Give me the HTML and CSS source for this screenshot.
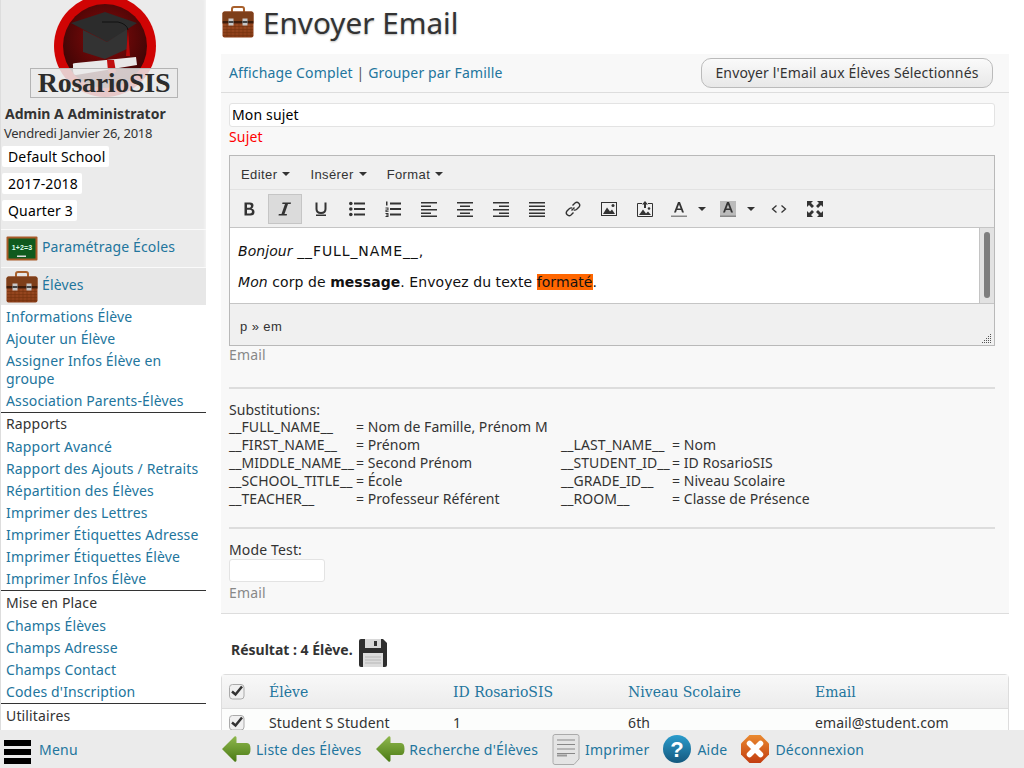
FILE: index.html
```html
<!DOCTYPE html>
<html lang="fr">
<head>
<meta charset="utf-8">
<title>Envoyer Email</title>
<link rel="stylesheet" href="styles.css">
</head>
<body>
<svg class="defs" width="0" height="0" aria-hidden="true">
  <defs>
    <linearGradient id="bagG" x1="0" y1="0" x2="0" y2="1"><stop offset="0" stop-color="#a8542a"/><stop offset="1" stop-color="#8a3d18"/></linearGradient>
    <linearGradient id="arrG" x1="0" y1="0" x2="0" y2="1"><stop offset="0" stop-color="#8fb84e"/><stop offset="1" stop-color="#4a7a14"/></linearGradient>
    <linearGradient id="helpG" x1="0" y1="0" x2="0" y2="1"><stop offset="0" stop-color="#2a9ccc"/><stop offset="1" stop-color="#15587e"/></linearGradient>
    <linearGradient id="closeG" x1="0" y1="0" x2="0" y2="1"><stop offset="0" stop-color="#ea8a30"/><stop offset="1" stop-color="#c23c10"/></linearGradient>
    <radialGradient id="logoG" cx="0.5" cy="0.4" r="0.6"><stop offset="0" stop-color="#8a0a0a"/><stop offset="1" stop-color="#3a0505"/></radialGradient>
    <symbol id="bag" viewBox="0 0 32 32">
      <path d="M10 7V3Q10 1 12 1H20Q22 1 22 3V7" fill="none" stroke="#a8602c" stroke-width="2"/>
      <rect x="0.500" y="5.500" width="31" height="26" rx="2" fill="url(#bagG)"/>
      <path d="M0.500 7.500Q0.500 5.500 2.500 5.500H29.500Q31.500 5.500 31.500 7.500V15H0.500Z" fill="#7e3f1a"/>
      <path d="M1 20.500H31M1 23.500H31M1 26.500H31M1 29.500H31M5 18V31M9 18V31M13 18V31M17 18V31M21 18V31M25 18V31M29 18V31" stroke="#73330f" stroke-width="0.600" fill="none"/>
      <rect x="0.500" y="15" width="31" height="2.500" fill="#3e1c0a"/>
      <rect x="6.500" y="12.500" width="5" height="7" fill="#c8c8c8"/><rect x="20.500" y="12.500" width="5" height="7" fill="#c8c8c8"/>
      <rect x="6.500" y="15" width="5" height="2" fill="#444"/><rect x="20.500" y="15" width="5" height="2" fill="#444"/>
    </symbol>
    <symbol id="arrow" viewBox="0 0 30 28">
      <path d="M1 14 13.500 1.500Q15 0.500 15.500 2.500V8H26Q29.500 8 29.500 14T26 20H15.500V25.500Q15 27.500 13.500 26.500Z" fill="url(#arrG)"/>
    </symbol>
    <symbol id="caret" viewBox="0 0 8 4"><path d="M0 0H8L4 4Z" fill="#333"/></symbol>
    <symbol id="check" viewBox="0 0 16 16">
      <rect x="0.500" y="0.500" width="14.500" height="14.500" rx="3" fill="#f0f0f0" stroke="#aaa"/>
      <path d="M3 7.500 6.500 10.500 13 2.500" fill="none" stroke="#333" stroke-width="2.500"/>
    </symbol>
  </defs>
</svg>

<div class="page">
  <aside class="sidebar">
    <div class="logo">
      <svg class="logo-art" viewBox="0 0 148 100" width="148" height="100" aria-hidden="true">
        <circle cx="75" cy="46" r="51" fill="#d00404"/>
        <circle cx="75" cy="46" r="42" fill="url(#logoG)"/>
        <path d="M53 30V52L75 59 97 49V28L77 42Z" fill="#333"/>
        <path d="M41 23 75 12 107 23 77 42Z" fill="#2c2c2c"/>
        <path d="M72 22H88Q97 24 98 30" fill="none" stroke="#111" stroke-width="1"/>
        <path d="M98 30 100 56H96Z" fill="#b80808"/>
        <path d="M43 65Q42 63 46 63L106 57 107 65 46 75Q43 75 43 70Z" fill="#e8e8e8"/>
        <path d="M77 60H84L86 72 81 74 78 71Z" fill="#c01010"/>
        <rect x="0.500" y="68.500" width="147" height="29" fill="#ebebeb" fill-opacity="0.850" stroke="#b4b4b4"/>
      </svg>
      <span class="logo-text">RosarioSIS</span>
    </div>
    <div class="user-name">Admin A Administrator</div>
    <div class="user-date">Vendredi Janvier 26, 2018</div>
    <div class="picker"><span>Default School</span></div>
    <div class="picker"><span>2017-2018</span></div>
    <div class="picker"><span>Quarter 3</span></div>

    <div class="menu-head first">
      <svg class="menu-icon" viewBox="0 0 32 26" width="32" height="26" aria-hidden="true">
        <rect x="0.500" y="0.500" width="31" height="24" rx="1" fill="#a85a28"/>
        <rect x="2.500" y="2.500" width="27" height="20" fill="#0f5a1e"/>
        <rect x="11" y="19.500" width="9" height="1.500" fill="#ddd"/>
        <text x="16" y="14" class="board-text">1+2=3</text>
      </svg>
      <a href="#">Paramétrage Écoles</a>
    </div>
    <div class="menu-head active">
      <svg class="menu-icon" width="32" height="32" aria-hidden="true"><use href="#bag"/></svg>
      <a href="#">Élèves</a>
    </div>
    <nav class="submenu">
      <a href="#">Informations Élève</a>
      <a href="#">Ajouter un Élève</a>
      <a href="#">Assigner Infos Élève en groupe</a>
      <a href="#">Association Parents-Élèves</a>
      <div class="menu-group">Rapports</div>
      <a href="#">Rapport Avancé</a>
      <a href="#">Rapport des Ajouts / Retraits</a>
      <a href="#">Répartition des Élèves</a>
      <a href="#">Imprimer des Lettres</a>
      <a href="#">Imprimer Étiquettes Adresse</a>
      <a href="#">Imprimer Étiquettes Élève</a>
      <a href="#">Imprimer Infos Élève</a>
      <div class="menu-group roomy">Mise en Place</div>
      <a href="#">Champs Élèves</a>
      <a href="#">Champs Adresse</a>
      <a href="#">Champs Contact</a>
      <a href="#">Codes d'Inscription</a>
      <div class="menu-group roomy">Utilitaires</div>
    </nav>
  </aside>

  <main class="content">
    <h1 class="title">
      <svg class="title-icon" width="32" height="32" aria-hidden="true"><use href="#bag"/></svg>
      Envoyer Email
    </h1>

    <form class="panel">
      <div class="panel-top">
        <div class="panel-links"><a href="#">Affichage Complet</a> | <a href="#">Grouper par Famille</a></div>
        <button type="button" class="send">Envoyer l'Email aux Élèves Sélectionnés</button>
      </div>
      <div class="panel-body">
        <div class="subject">Mon sujet</div>
        <div class="label-red">Sujet</div>

        <div class="editor">
          <div class="ed-menu">
            <span>Editer<svg class="caret" width="8" height="4"><use href="#caret"/></svg></span>
            <span>Insérer<svg class="caret" width="8" height="4"><use href="#caret"/></svg></span>
            <span>Format<svg class="caret" width="8" height="4"><use href="#caret"/></svg></span>
          </div>
          <div class="ed-tools">
            <span class="tool"><svg viewBox="0 0 16 16"><path d="M3.500 1.500H9Q12.500 1.500 12.500 4.500 12.500 6.800 10.500 7.500 13.500 8 13.500 11 13.500 14.500 9.500 14.500H3.500ZM6 3.500V6.800H8.500Q10 6.800 10 5.100T8.500 3.500ZM6 8.800V12.500H9Q11 12.500 11 10.700T9 8.800Z" fill="#333" fill-rule="evenodd"/></svg></span>
            <span class="tool on"><svg viewBox="0 0 16 16"><path d="M5.500 1.500H14L13.700 3H11L7.500 13H10L9.700 14.500H1.500L1.800 13H4.500L8 3H5.200Z" fill="#333"/></svg></span>
            <span class="tool"><svg viewBox="0 0 16 16"><path d="M3.500 1.500V8Q3.500 12 8 12T12.500 8V1.500" fill="none" stroke="#333" stroke-width="2"/><rect x="3" y="13.500" width="10" height="1.500" fill="#333"/></svg></span>
            <span class="tool"><svg viewBox="0 0 16 16"><circle cx="1.800" cy="2.500" r="1.800" fill="#333"/><circle cx="1.800" cy="8" r="1.800" fill="#333"/><circle cx="1.800" cy="13.500" r="1.800" fill="#333"/><path d="M5 1.500H16V3.500H5ZM5 7H16V9H5ZM5 12.500H16V14.500H5Z" fill="#333"/></svg></span>
            <span class="tool"><svg viewBox="0 0 16 16"><path d="M1 0.500H2.500V4.500H1ZM0.500 6.500H3.500V9.500H1.500V10.200H3.500V11H0.500V8.500H2.500V7.500H0.500ZM0.500 12H3.500V16H0.500V15H2.500V14.500H1V13.500H2.500V13H0.500ZM5 1.500H16V3.500H5ZM5 7H16V9H5ZM5 12.500H16V14.500H5Z" fill="#333"/></svg></span>
            <span class="tool"><svg viewBox="0 0 16 16"><path d="M0 1H16V2.500H0ZM0 4.500H10V6H0ZM0 8H16V9.500H0ZM0 11.500H10V13H0ZM0 14.500H16V16H0Z" fill="#333"/></svg></span>
            <span class="tool"><svg viewBox="0 0 16 16"><path d="M0 1H16V2.500H0ZM3 4.500H13V6H3ZM0 8H16V9.500H0ZM3 11.500H13V13H3ZM0 14.500H16V16H0Z" fill="#333"/></svg></span>
            <span class="tool"><svg viewBox="0 0 16 16"><path d="M0 1H16V2.500H0ZM6 4.500H16V6H6ZM0 8H16V9.500H0ZM6 11.500H16V13H6ZM0 14.500H16V16H0Z" fill="#333"/></svg></span>
            <span class="tool"><svg viewBox="0 0 16 16"><path d="M0 1H16V2.500H0ZM0 4.500H16V6H0ZM0 8H16V9.500H0ZM0 11.500H16V13H0ZM0 14.500H16V16H0Z" fill="#333"/></svg></span>
            <span class="tool"><svg viewBox="0 0 16 16"><path d="M6.500 9.500 9.500 6.500M7.500 4.500 10 2Q12 0.500 13.800 2.200T14 6L11.500 8.500Q10 9.500 8.800 8.800M8.500 11.500 6 14Q4 15.500 2.200 13.800T2 10L4.500 7.500Q6 6.500 7.200 7.200" fill="none" stroke="#333" stroke-width="1.400"/></svg></span>
            <span class="tool"><svg viewBox="0 0 16 16"><rect x="0.500" y="1.500" width="15" height="13" fill="none" stroke="#333"/><path d="M2 13 6 6.500 9 10.500 11 8.500 14 13Z" fill="#333"/><circle cx="12" cy="4.500" r="1.500" fill="#333"/></svg></span>
            <span class="tool"><svg viewBox="0 0 16 16"><path d="M5 2.500H0.500V15.500H15.500V2.500H11" fill="none" stroke="#333"/><path d="M8 0 11 3.500H9V7H7V3.500H5Z" fill="#333"/><path d="M2 14 6 8.500 9 12.500 11 10.500 14 14Z" fill="#333"/><circle cx="12" cy="7.500" r="1.300" fill="#333"/></svg></span>
            <span class="tool color"><svg viewBox="0 0 16 16"><path d="M7 1H9L13 11.500H11L10.200 9H5.800L5 11.500H3ZM8 3.500 6.400 7.500H9.600Z" fill="#333" fill-rule="evenodd"/><rect y="14.500" width="16" height="1.500" fill="#888"/></svg></span>
            <span class="tool-caret"><svg width="8" height="4"><use href="#caret"/></svg></span>
            <span class="tool color"><svg viewBox="0 0 16 16"><rect width="16" height="16" fill="#bbb"/><path d="M7 1H9L13 11.500H11L10.200 9H5.800L5 11.500H3ZM8 3.500 6.400 7.500H9.600Z" fill="#333" fill-rule="evenodd"/><rect y="14.500" width="16" height="1.500" fill="#888"/></svg></span>
            <span class="tool-caret"><svg width="8" height="4"><use href="#caret"/></svg></span>
            <span class="tool"><svg viewBox="0 0 16 16"><path d="M5.500 4.500 1.500 8 5.500 11.500M10.500 4.500 14.500 8 10.500 11.500" fill="none" stroke="#333" stroke-width="1.300"/></svg></span>
            <span class="tool"><svg viewBox="0 0 16 16"><path d="M0 0H6L4 2 7 5 5 7 2 4 0 6ZM16 0V6L14 4 11 7 9 5 12 2 10 0ZM0 16V10L2 12 5 9 7 11 4 14 6 16ZM16 16H10L12 14 9 11 11 9 14 12 16 10Z" fill="#333"/></svg></span>
          </div>
          <div class="ed-area">
            <div class="ed-text">
              <p><em>Bonjour</em> <span class="tag">__FULL_NAME__</span>,</p>
              <p><em>Mon</em> corp de <strong>message</strong>. Envoyez du texte <mark>formaté</mark>.</p>
            </div>
            <div class="ed-scroll"><span></span></div>
          </div>
          <div class="ed-status">
            <span>p » em</span>
            <svg class="grip" viewBox="0 0 10 10" width="10" height="10"><path d="M8 1h1v1H8ZM6 3h1v1H6ZM8 3h1v1H8ZM4 5h1v1H4ZM6 5h1v1H6ZM8 5h1v1H8ZM2 7h1v1H2ZM4 7h1v1H4ZM6 7h1v1H6ZM8 7h1v1H8ZM0 9h1v1H0ZM2 9h1v1H2ZM4 9h1v1H4ZM6 9h1v1H6ZM8 9h1v1H8Z" fill="#555"/></svg>
          </div>
        </div>
        <div class="label-gray">Email</div>

        <hr class="rule first-rule">

        <div class="subs">
          <div class="subs-title">Substitutions:</div>
          <div class="subs-grid">
            <span>__FULL_NAME__</span><span>= Nom de Famille, Prénom M</span><span></span><span></span>
            <span>__FIRST_NAME__</span><span>= Prénom</span><span>__LAST_NAME__</span><span>= Nom</span>
            <span>__MIDDLE_NAME__</span><span>= Second Prénom</span><span>__STUDENT_ID__</span><span>= ID RosarioSIS</span>
            <span>__SCHOOL_TITLE__</span><span>= École</span><span>__GRADE_ID__</span><span>= Niveau Scolaire</span>
            <span>__TEACHER__</span><span>= Professeur Référent</span><span>__ROOM__</span><span>= Classe de Présence</span>
          </div>
        </div>

        <hr class="rule second-rule">

        <div class="test-label">Mode Test:</div>
        <div class="test-input"></div>
        <div class="label-gray">Email</div>
      </div>
    </form>

    <div class="result">
      <strong>Résultat : 4 Élève.</strong>
      <svg class="save" viewBox="0 0 28 28" width="28" height="28" aria-hidden="true">
        <path d="M2 0H24L28 4V26Q28 28 26 28H2Q0 28 0 26V2Q0 0 2 0Z" fill="#2e2e2e"/>
        <rect x="6" y="0" width="16" height="9" fill="#d8d8d8"/><rect x="15" y="2" width="3" height="5" fill="#333"/>
        <rect x="4" y="14" width="20" height="14" fill="#dcdcdc"/>
        <path d="M6 18H22M6 21H22M6 24H22" stroke="#b8b8b8"/>
      </svg>
    </div>

    <table class="list">
      <thead>
        <tr>
          <th class="c0"><svg width="16" height="16"><use href="#check"/></svg></th>
          <th class="c1">Élève</th><th class="c2">ID RosarioSIS</th><th class="c3">Niveau Scolaire</th><th class="c4">Email</th>
        </tr>
      </thead>
      <tbody>
        <tr>
          <td class="c0"><svg width="16" height="16"><use href="#check"/></svg></td>
          <td>Student S Student</td><td>1</td><td>6th</td><td>email@student.com</td>
        </tr>
      </tbody>
    </table>
  </main>
</div>

<footer class="bottom">
  <div class="bottom-left">
    <svg class="burger" viewBox="0 0 27 24" width="27" height="24" aria-hidden="true"><path d="M0 0H27V6H0ZM0 9H27V15H0ZM0 18H27V24H0Z" fill="#000"/></svg>
    <a href="#">Menu</a>
  </div>
  <div class="bottom-right">
    <a href="#"><svg width="30" height="28" aria-hidden="true"><use href="#arrow"/></svg>Liste des Élèves</a>
    <a href="#" class="tight"><svg width="30" height="28" aria-hidden="true"><use href="#arrow"/></svg>Recherche d'Élèves</a>
    <a href="#"><svg viewBox="0 0 28 31" width="28" height="31" aria-hidden="true"><path d="M3 0.500H25Q27 0.500 27 2.500V25L22 30.500H3Q1 30.500 1 28.500V2.500Q1 0.500 3 0.500Z" fill="#e4e4e4" stroke="#aaa"/><path d="M5 6H23M5 10.500H23M5 15H23M5 19.500H23" stroke="#888"/><path d="M5 21.500H15" stroke="#999" stroke-width="2"/></svg>Imprimer</a>
    <a href="#" class="wide"><svg viewBox="0 0 28 28" width="28" height="28" aria-hidden="true"><circle cx="14" cy="14" r="14" fill="url(#helpG)"/><text x="14" y="22" class="help-mark">?</text></svg>Aide</a>
    <a href="#" class="wide"><svg viewBox="0 0 28 28" width="28" height="28" aria-hidden="true"><path d="M8.500 0H19.500L28 8.500V19.500L19.500 28H8.500L0 19.500V8.500Z" fill="url(#closeG)"/><path d="M8.500 8.500 19.500 19.500M19.500 8.500 8.500 19.500" stroke="#fff" stroke-width="5.500" stroke-linecap="round"/></svg>Déconnexion</a>
  </div>
</footer>
</body>
</html>
```

FILE: styles.css
```css
* { box-sizing: border-box; }
html, body { margin: 0; height: 100%; overflow: hidden; }
body { font: 14px/18px "Noto Sans", "Open Sans", sans-serif; letter-spacing: 0.15px; color: #333; background: #fff; }
a { color: #22759d; text-decoration: none; }
strong { letter-spacing: 0; }
.defs { position: absolute; }

.page { display: flex; height: 730px; overflow: hidden; }

.sidebar { display: flex; flex-direction: column; flex: 0 0 206px; width: 206px; height: 730px; overflow: hidden; background: #ebebeb; border-left: 1px solid #ddd; box-shadow: inset -3px 0 3px -2px #f6f6f6; }
.logo { position: relative; flex: none; height: 98px; }
.logo-art { position: absolute; left: 29px; top: 0; }
.logo-text { position: absolute; left: 29px; top: 68px; width: 148px; text-align: center; font: bold 28px/30px "Liberation Serif", serif; color: #2c2c2c; letter-spacing: -0.3px; }
.user-name { flex: none; padding: 7px 0 0 4px; font-weight: bold; height: 25px; letter-spacing: 0; }
.user-date { flex: none; padding-left: 3px; font-size: 13px; letter-spacing: -0.25px; height: 20px; line-height: 20px; }
.picker { flex: none; height: 27px; padding: 3px 0 0 1px; color: #000; }
.picker span { display: inline-block; height: 21px; padding: 1px 4px 0 6px; line-height: 20px; background: #fff; border-radius: 2px; }

.menu-head { display: flex; flex: none; align-items: center; gap: 4px; height: 38px; padding: 0 0 3px 5px; border-top: 1px solid #fafafa; }
.menu-head.first { margin-top: 5px; }
.menu-head.active { background: #e7e7e7; }
.menu-icon { flex: none; margin-top: 3px; }
.board-text { font: bold 7px "Liberation Sans", sans-serif; fill: #dfe; text-anchor: middle; }

.submenu { flex: 1; background: #fff; padding-top: 1px; }
.submenu a { display: block; padding: 2px 5px 2px; line-height: 18px; }
.menu-group { padding: 1px 5px 3px; border-top: 1px solid #333; line-height: 19px; color: #333; }
.menu-group.roomy { padding-top: 2px; }

.content { flex: 1; min-width: 0; padding: 0 15px 0 15px; }
.title { display: flex; align-items: center; gap: 9px; margin: 0; height: 54px; font-size: 29.700px; line-height: 46px; font-weight: normal; letter-spacing: 0; color: #333; padding: 0 0 8px 1px; text-shadow: 0 1px 2px #bbb; }
.title-icon { flex: none; margin-bottom: 2px; }

.panel { background: #f8f8f8; border-bottom: 1px solid #ddd; }
.panel-top { display: flex; justify-content: space-between; align-items: center; height: 39px; padding: 0 16px 0 8px; border-bottom: 1px solid #ddd; }
.panel-links { color: #555; }
.send { height: 30px; width: 292px; padding: 0; margin-top: -1px; border: 1px solid #bbb; border-radius: 10px; font: 14px "Noto Sans", sans-serif; letter-spacing: 0.15px; color: #333; background: linear-gradient(#fafafa, #e8e8e8); }
.panel-body { padding: 10px 14px 11px 8px; }
.subject { height: 24px; padding: 2px; background: #fff; border: 1px solid #e3e3e3; border-radius: 3px; color: #000; }
.label-red { color: #f00; height: 20px; line-height: 20px; margin-top: 0; }

.editor { margin-top: 8px; border: 1px solid #b9b9b9; background: #f0f0f0; }
.ed-menu { display: flex; gap: 20px; height: 34px; padding: 10px 0 0 11px; border-bottom: 1px solid #e2e2e2; font: 13px/18px "Liberation Sans", sans-serif; letter-spacing: 0.4px; color: #333; }
.caret { margin: 0 0 3px 5px; }
.ed-tools { display: flex; align-items: center; height: 38px; padding-left: 1px; border-bottom: 1px solid #c5c5c5; }
.tool { display: flex; align-items: center; justify-content: center; width: 36px; height: 30px; flex: none; }
.tool svg { width: 16px; height: 16px; }
.tool.on { width: 34px; margin: 0 1px; background: #dbdbdb; border: 1px solid #c5c5c5; }
.tool.color { width: 32px; }
.tool-caret { flex: none; width: 14px; margin-right: 3px; display: flex; align-items: center; justify-content: center; }
.ed-area { display: flex; height: 76px; background: #fff; border-bottom: 1px solid #c5c5c5; }
.ed-text { flex: 1; padding: 1px 8px 0; font: 14px/18px "DejaVu Sans", sans-serif; letter-spacing: 0.07px; color: #111; }
.ed-text p { margin: 13px 0 13px; }
.ed-text em { font-style: italic; }
.ed-text strong { letter-spacing: 0.07px; }
.ed-text mark { background: #ff6600; color: #111; }
.tag { letter-spacing: 0.9px; }
.ed-scroll { flex: none; width: 15px; background: #e2e2e2; border-left: 1px solid #c4c4c4; padding: 4px 4px 5px 4px; }
.ed-scroll span { display: block; height: 100%; width: 6px; background: #7e7e7e; border-radius: 3px; }
.ed-status { position: relative; height: 41px; padding: 14px 0 0 10px; font: 13px/18px "Liberation Sans", sans-serif; letter-spacing: 0.4px; color: #333; }
.grip { position: absolute; right: 2px; bottom: 2px; }

.label-gray { color: #888; height: 18px; line-height: 18px; }
.rule { margin: 0; border: 0; height: 2px; background: #ddd; }
.first-rule { margin-top: 23px; }
.subs { margin-top: 12px; font-size: 14px; letter-spacing: 0.05px; }
.subs-title { height: 17px; }
.subs-grid { display: grid; grid-template-columns: 127px 205px 111px auto; grid-auto-rows: 18px; }
.second-rule { margin-top: 19px; }
.test-label { margin-top: 12px; height: 18px; }
.test-input { width: 96px; height: 23px; margin-top: 0; background: #fff; border: 1px solid #e3e3e3; border-radius: 3px; }
.test-input + .label-gray { margin-top: 2px; }

.result { display: flex; align-items: flex-end; gap: 6px; height: 32px; margin: 21px 0 7px; padding-left: 10px; }
.result strong { margin-bottom: 8px; }
.save { flex: none; }

.list { width: 788px; border-collapse: separate; border-spacing: 0; border: 1px solid #ddd; border-radius: 4px; table-layout: fixed; background: #fcfdfc; }
.list th { height: 34px; font: 14px/18px "DejaVu Serif", serif; font-weight: normal; letter-spacing: 0; color: #22759d; text-align: left; background: linear-gradient(#f8f8f8, #ececec); border-bottom: 1px solid #ddd; padding: 0; }
.list td { height: 34px; padding: 5px 0 3px; vertical-align: top; }
.list .c0 { width: 47px; padding-left: 7px; }
.list td.c0 { padding-top: 6px; }
.list .c1 { width: 184px; }
.list .c2 { width: 175px; }
.list .c3 { width: 187px; }
.list svg { display: block; }

.bottom { display: flex; align-items: center; height: 38px; padding-top: 2px; background: #ebebeb; letter-spacing: 0.22px; }
.bottom a { display: flex; align-items: center; }
.bottom-left { flex: none; width: 221px; display: flex; align-items: center; gap: 8px; padding-left: 4px; }
.burger { margin-top: 4px; }
.bottom-right { display: flex; align-items: center; gap: 14px; }
.bottom-right a { gap: 5px; }
.bottom-right a.tight { gap: 4px; }
.bottom-right a.wide { gap: 6px; }
.bottom-right svg { margin-bottom: 2px; }
.help-mark { font: bold 22px "Liberation Sans", sans-serif; fill: #fff; text-anchor: middle; }
```
